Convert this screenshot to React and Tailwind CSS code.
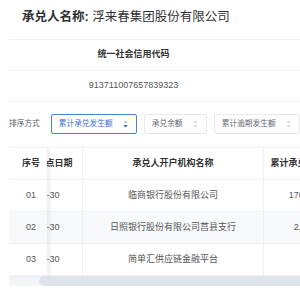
import React from "react";

const FONT = { fontFamily: '"Liberation Sans", "Noto Sans CJK SC", sans-serif' };

function Arrows({ active }) {
  return (
    <svg width="5" height="8" viewBox="0 0 5 8" className="shrink-0">
      <path d="M2.5 0.5 L4.7 3 L0.3 3 Z" fill={active ? "#b9c6e0" : "#d3d6dd"} />
      <path d="M2.5 7.5 L4.7 5 L0.3 5 Z" fill={active ? "#2f63c9" : "#d3d6dd"} />
    </svg>
  );
}

function Select({ label, width, active }) {
  return (
    <div
      className={`flex h-[20px] ${width} items-center justify-between rounded-[2px] border pl-[7px] pr-[8px] ${
        active ? "border-[#4a7fdc]" : "border-[#e6e8ee]"
      }`}
    >
      <span className={`text-[7.7px] leading-none ${active ? "text-[#3a6fd6]" : "text-[#666a73]"}`}>{label}</span>
      <Arrows active={active} />
    </div>
  );
}

const rows = [
  { no: "01", date: "2023-06-30", name: "临商银行股份有限公司", amt: "170,000,000.00" },
  { no: "02", date: "2023-06-30", name: "日照银行股份有限公司莒县支行", amt: "2,000,000.00" },
  { no: "03", date: "2023-06-30", name: "简单汇供应链金融平台", amt: "5,000.00" },
];

export default function App() {
  return (
    <div className="w-[300px] h-[300px] overflow-hidden bg-white" style={FONT}>
      <div className="pl-[9px]">
        {/* title */}
        <div className="h-[39px] pl-[13px] pt-[7px] leading-[20px] text-[12.5px] text-[#303133] whitespace-nowrap">
          <span className="font-bold">承兑人名称:</span> <span>浮来春集团股份有限公司</span>
        </div>

        {/* info table */}
        <div className="border-t border-[#eef0f4]">
          <div className="flex h-[31px] items-center border-b border-[#eef0f4]">
            <div className="w-[249px] text-center text-[9px] font-bold text-[#333]">统一社会信用代码</div>
          </div>
          <div className="flex h-[31px] items-center border-b border-[#eef0f4]">
            <div className="w-[249px] text-center text-[9px] text-[#555]">913711007657839323</div>
          </div>
        </div>

        {/* sort row */}
        <div className="mt-[12px] flex items-center whitespace-nowrap">
          <span className="mr-[11px] text-[7.7px] text-[#555a63] leading-none">排序方式</span>
          <div className="flex gap-[7px]">
            <Select label="累计承兑发生额" width="w-[86px]" active />
            <Select label="承兑余额" width="w-[63px]" />
            <Select label="累计逾期发生额" width="w-[86px]" />
          </div>
        </div>

        {/* table */}
        <div className="mt-[13px] border-t border-[#edf0f5] overflow-hidden">
          <div className="flex">
            <div className="relative z-10 w-[38px] shrink-0 bg-white shadow-[3px_0_4px_rgba(0,0,0,0.07)]">
              <div className="flex h-[32px] items-center justify-center border-b border-[#edf0f5] pl-[6px] text-[9px] font-bold text-[#333]">
                序号
              </div>
              {rows.map((r, i) => (
                <div
                  key={r.no}
                  className={`flex h-[32px] items-center justify-center border-b border-[#edf0f5] pl-[6px] text-[9px] text-[#555] ${
                    i === 1 ? "bg-[#f8f9fb]" : "bg-white"
                  }`}
                >
                  {r.no}
                </div>
              ))}
            </div>
            <div className="min-w-0 flex-1 overflow-hidden">
              <div className="-ml-[56px] w-max whitespace-nowrap">
                <div className="flex h-[32px] border-b border-[#edf0f5] text-[9px] font-bold text-[#333]">
                  <div className="flex w-[92px] items-center justify-center border-r border-[#edf0f5]">最新统计截点日期</div>
                  <div className="flex w-[181px] items-center justify-center border-r border-[#edf0f5]">承兑人开户机构名称</div>
                  <div className="flex w-[112px] items-center justify-center">累计承兑发生额（万元）</div>
                </div>
                {rows.map((r, i) => (
                  <div
                    key={r.no}
                    className={`flex h-[32px] border-b border-[#edf0f5] text-[9px] text-[#555] ${
                      i === 1 ? "bg-[#f8f9fb]" : "bg-white"
                    }`}
                  >
                    <div className="flex w-[92px] items-center justify-center border-r border-[#edf0f5]">{r.date}</div>
                    <div className="flex w-[181px] items-center justify-center border-r border-[#edf0f5]">{r.name}</div>
                    <div className="flex w-[112px] items-center justify-center">{r.amt}</div>
                  </div>
                ))}
              </div>
            </div>
          </div>
          {/* scrollbar */}
          <div className="flex h-[10px] bg-[#f4f5f8]">
            <div className="ml-[30px] flex-1 rounded-l-[5px] bg-[#dfe3eb]" />
          </div>
        </div>
      </div>
    </div>
  );
}
